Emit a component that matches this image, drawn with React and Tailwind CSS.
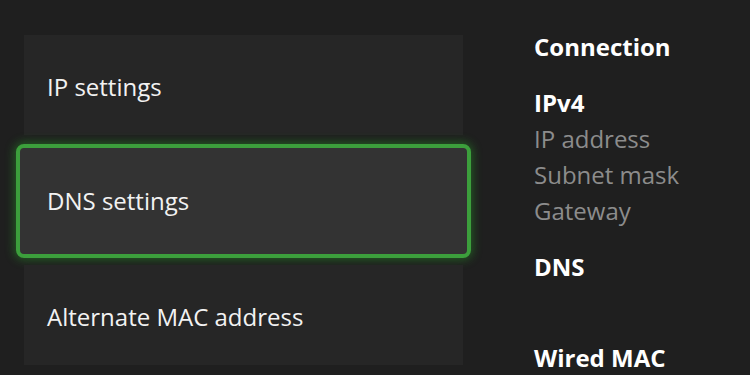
import React from 'react';

const ITEMS = [
  { id: 'ip', label: 'IP settings' },
  { id: 'dns', label: 'DNS settings', focused: true },
  { id: 'mac', label: 'Alternate MAC address' },
];

const SettingRow = ({ label, focused }) =>
  focused ? (
    <div className="mt-[9px] -mx-[8px] h-[114px] rounded-[8px] border-[4px] border-[#3c9f3c] bg-[#333333] shadow-[0_0_10px_2px_rgba(40,160,40,0.45)] flex items-center pl-[27px]">
      <span className="text-[24px] text-[#f2f2f2]">{label}</span>
    </div>
  ) : (
    <div className="h-[100px] bg-[#262626] flex items-center pl-[23px] pt-[3px] first:mt-0 mt-[7px]">
      <span className="text-[24px] text-[#f2f2f2]">{label}</span>
    </div>
  );

export default function App() {
  return (
    <div
      className="w-[750px] h-[375px] overflow-hidden bg-[#1f1f1f] flex"
      style={{ fontFamily: '"Open Sans", "Noto Sans", sans-serif' }}
    >
      {/* lista de opcoes */}
      <div className="w-[439px] ml-[24px] pt-[35px] flex flex-col">
        {ITEMS.map((it) => (
          <SettingRow key={it.id} {...it} />
        ))}
      </div>

      {/* painel de detalhes */}
      <div className="ml-[71px] pt-[29px] flex flex-col text-[24px] leading-[36px]">
        <h2 className="font-bold text-white">Connection</h2>
        <h3 className="mt-[20px] font-bold text-white">IPv4</h3>
        <p className="text-[#8c8c8c]">IP address</p>
        <p className="text-[#8c8c8c]">Subnet mask</p>
        <p className="text-[#8c8c8c]">Gateway</p>
        <h3 className="mt-[20px] font-bold text-white">DNS</h3>
        <h3 className="mt-[55px] font-bold text-white">Wired MAC</h3>
      </div>
    </div>
  );
}
